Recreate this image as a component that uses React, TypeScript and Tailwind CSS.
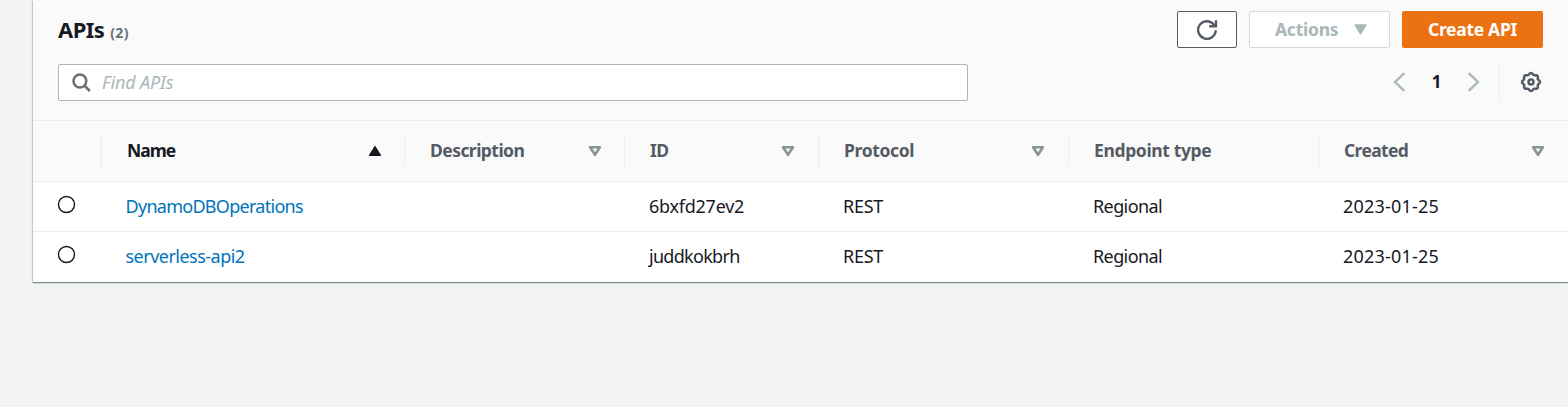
import React from 'react';

type SortKind = 'asc' | 'desc' | 'none';

const cols: { label: string; w: string; pad: string; tracking: string; icon: SortKind }[] = [
  { label: 'Name', w: 'w-[303px]', pad: 'pr-[22px]', tracking: 'tracking-[-1px]', icon: 'asc' },
  { label: 'Description', w: 'w-[220px]', pad: 'pr-[22px]', tracking: 'tracking-[-0.55px]', icon: 'desc' },
  { label: 'ID', w: 'w-[194px]', pad: 'pr-[23px]', tracking: 'tracking-[-0.6px]', icon: 'desc' },
  { label: 'Protocol', w: 'w-[250px]', pad: 'pr-[23px]', tracking: 'tracking-[-0.35px]', icon: 'desc' },
  { label: 'Endpoint type', w: 'w-[250px]', pad: 'pr-[22px]', tracking: 'tracking-[-0.36px]', icon: 'none' },
  { label: 'Created', w: 'w-[249px]', pad: 'pr-[22px]', tracking: 'tracking-[-0.65px]', icon: 'desc' },
];

const rows = [
  {
    name: 'DynamoDBOperations',
    nameTracking: 'tracking-[-0.72px]',
    id: '6bxfd27ev2',
    idTracking: 'tracking-[-0.25px]',
    line: 'border-[#eaeded]',
  },
  {
    name: 'serverless-api2',
    nameTracking: 'tracking-[-0.52px]',
    id: 'juddkokbrh',
    idTracking: 'tracking-[-0.7px]',
    line: 'border-transparent',
  },
];

function SortIcon({ kind }: { kind: SortKind }) {
  if (kind === 'none') return null;
  if (kind === 'asc')
    return (
      <svg width="14" height="12" viewBox="0 0 14 12">
        <path d="M7 1.5 12.5 10.3H1.5Z" fill="#16191f" stroke="#16191f" strokeWidth="1.2" strokeLinejoin="round" />
      </svg>
    );
  return (
    <svg width="14" height="12" viewBox="0 0 14 12">
      <path d="M2.1 2.2H11.9L7 9.8Z" fill="none" stroke="#879596" strokeWidth="2.6" strokeLinejoin="round" />
    </svg>
  );
}

// Outline of a cog with eight rounded teeth, centred on (11, 11).
const gearPath =
  Array.from({ length: 96 }, (_, i) => {
    const a = (i / 96) * Math.PI * 2;
    const r = 8.2 + 0.75 * Math.cos(8 * a);
    return `${i ? 'L' : 'M'}${(11 + r * Math.cos(a)).toFixed(2)} ${(11 + r * Math.sin(a)).toFixed(2)}`;
  }).join('') + 'Z';

function Gear() {
  return (
    <svg width="22" height="22" viewBox="0 0 22 22" fill="none" stroke="#545b64" strokeWidth="2.5" strokeLinejoin="round">
      <path d={gearPath} />
      <circle cx="11" cy="11" r="2.5" />
    </svg>
  );
}

export default function App() {
  return (
    <div className="h-[407px] w-[1568px] overflow-hidden bg-[#f2f3f3] pl-[33px] font-['Noto_Sans',sans-serif] text-[#16191f]">
      <main className="h-[282px] bg-white shadow-[0_1px_1px_0_rgba(0,28,36,0.3),1px_1px_1px_0_rgba(0,28,36,0.15),-1px_1px_1px_0_rgba(0,28,36,0.15)]">
        <header className="h-[121px] border-b border-[#eaeded] bg-[#fafafa] px-[25px]">
          <div className="flex h-[64px] items-start justify-between pt-[11px]">
            <h1 className="flex items-baseline pt-[4px] text-[22px] leading-[28px] font-bold tracking-[-0.55px]">
              APIs <span className="ml-[6px] text-[14px] tracking-[0.3px] text-[#687078]">(2)</span>
            </h1>
            <div className="flex gap-3 text-[17.5px] font-bold">
              <button aria-label="Refresh" className="flex h-[37px] w-[60px] items-center justify-center rounded-[2px] border border-[#545b64] bg-white">
                <svg width="22" height="22" viewBox="0 0 22 22" fill="none" stroke="#545b64" strokeWidth="2.4">
                  <path d="M19.7 11.2A8.8 8.8 0 1 1 17.6 5.3L19.2 7" />
                  <path d="M20 1.2V7.2H13.2" />
                </svg>
              </button>
              <button className="flex h-[37px] w-[141px] items-center rounded-[2px] border border-[#d5dbdb] bg-white pl-[25px] text-[#aab7b8]">
                <span className="w-[78.5px] text-left tracking-[-0.25px]">Actions</span>
                <svg width="13" height="11" viewBox="0 0 13 11">
                  <path d="M1 1H12L6.5 9.8Z" fill="#aab7b8" stroke="#aab7b8" strokeWidth="1.4" strokeLinejoin="round" />
                </svg>
              </button>
              <button className="h-[37px] w-[141px] rounded-[2px] bg-[#ec7211] tracking-[-0.3px] text-white">Create API</button>
            </div>
          </div>
          <div className="flex h-[37px] items-center justify-between">
            <div className="flex h-[37px] w-[910px] items-center rounded-[2px] border border-[#aab7b8] bg-white pl-[13px]">
              <svg width="20" height="20" viewBox="0 0 20 20" fill="none" stroke="#687078" strokeWidth="2.5">
                <circle cx="7.9" cy="8" r="6.4" />
                <path d="m12.4 12.5 5.4 5.5" />
              </svg>
              <span className="ml-[10px] text-[18px] tracking-[-0.15px] text-[#aab7b8] italic">Find APIs</span>
            </div>
            <div className="flex h-[37px] items-center">
              <svg className="mb-[2px]" width="13" height="20" viewBox="0 0 13 20" fill="none" stroke="#aab7b8" strokeWidth="2.4">
                <path d="M11.3 1.2 2.1 10l9.2 8.8" />
              </svg>
              <span className="w-[61px] pb-[2px] text-center text-[17px] font-bold">1</span>
              <svg className="mb-[2px]" width="13" height="20" viewBox="0 0 13 20" fill="none" stroke="#aab7b8" strokeWidth="2.4">
                <path d="m1.7 1.2 9.2 8.8-9.2 8.8" />
              </svg>
              <div className="ml-[19px] flex h-[37px] items-center border-l border-[#eaeded] pr-[1px] pb-[1px] pl-[20px]">
                <Gear />
              </div>
            </div>
          </div>
        </header>
        <div className="flex h-[61px] items-center border-b border-[#eaeded] bg-[#fafafa] pl-[68px]">
          {cols.map((c, i) => (
            <div
              key={c.label}
              className={`flex h-[31px] items-center justify-between border-l border-[#eaeded] pl-[25px] text-[17.5px] font-bold ${c.w} ${c.pad} ${i === 0 ? 'text-[#16191f]' : 'text-[#545b64]'}`}
            >
              <span className={`pb-[2px] ${c.tracking}`}>{c.label}</span>
              <SortIcon kind={c.icon} />
            </div>
          ))}
        </div>
        {rows.map((r) => (
          <div key={r.name} className={`flex h-[50px] items-center border-b pl-[24px] text-[18px] ${r.line}`}>
            <div className="w-[44px] pb-[4px]">
              <svg width="19" height="19" viewBox="0 0 19 19">
                <circle cx="9.5" cy="9.5" r="8" fill="#fff" stroke="#16191f" strokeWidth="1.4" />
              </svg>
            </div>
            <div className="flex">
              <div className={`w-[303px] pl-[24.5px] text-[#0073bb] ${r.nameTracking}`}>{r.name}</div>
              <div className="w-[220px]" />
              <div className={`w-[194px] pl-[25px] ${r.idTracking}`}>{r.id}</div>
              <div className="w-[250px] pl-[25px] tracking-[-0.25px]">REST</div>
              <div className="w-[250px] pl-[25px] tracking-[-0.6px]">Regional</div>
              <div className="pl-[25px] tracking-[0.2px]">2023-01-25</div>
            </div>
          </div>
        ))}
      </main>
    </div>
  );
}
